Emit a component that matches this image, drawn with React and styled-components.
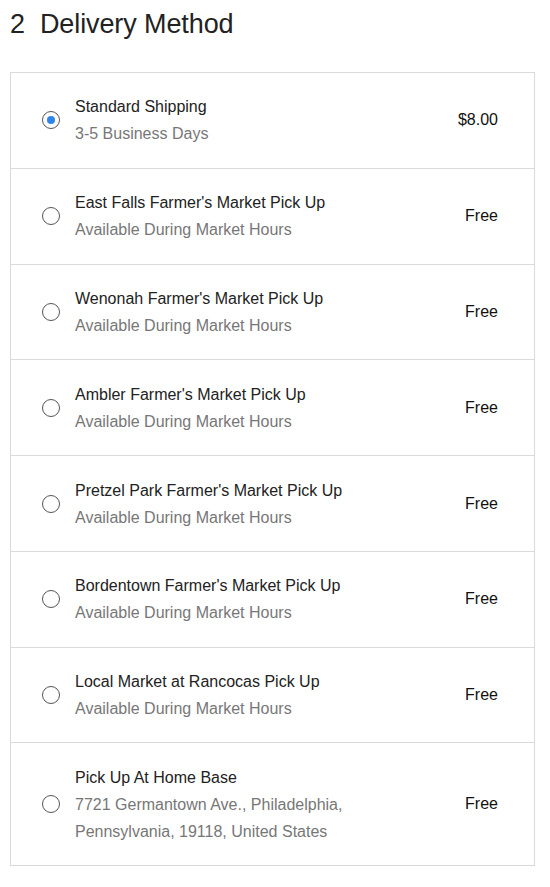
import React, { useState } from 'react'
import styled, { createGlobalStyle } from 'styled-components'

const GlobalStyle = createGlobalStyle`
  body {
    margin: 0;
    background: #fff;
    font-family: "Liberation Sans", Arial, sans-serif;
  }
`

const Page = styled.div`
  padding: 7px 15px 20px 10px;
  width: 550px;
  box-sizing: border-box;
`

const Heading = styled.h2`
  margin: 0 0 30px 0;
  font-size: 27px;
  font-weight: 400;
  line-height: 35px;
  color: #222;
  letter-spacing: -0.1px;
  > span {
    margin-right: 15px;
  }
`

const Options = styled.ul`
  margin: 0;
  padding: 0;
  list-style: none;
  border: 1px solid #dadada;
`

const Option = styled.li`
  display: flex;
  align-items: center;
  padding: 20.4px 36px 20.4px 31px;
  cursor: pointer;
  & + & {
    border-top: 1px solid #dadada;
  }
`

const Radio = styled.span`
  flex: none;
  width: 18px;
  height: 18px;
  box-sizing: border-box;
  border-radius: 50%;
  border: 1px solid #555;
  display: flex;
  align-items: center;
  justify-content: center;
  margin-right: 15px;
  &::after {
    content: '';
    width: 8px;
    height: 8px;
    border-radius: 50%;
    background: ${p => (p.$checked ? '#2f84ec' : 'transparent')};
  }
`

const Info = styled.div`
  flex: 1;
  line-height: 27px;
  font-size: 16px;
`

const Title = styled.div`
  color: #222;
`

const Detail = styled.div`
  color: #777;
  white-space: pre-line;
`

const Price = styled.div`
  font-size: 16px;
  color: #111;
`

const methods = [
  { id: 'standard', title: 'Standard Shipping', detail: '3-5 Business Days', price: '$8.00' },
  { id: 'eastfalls', title: "East Falls Farmer's Market Pick Up", detail: 'Available During Market Hours', price: 'Free' },
  { id: 'wenonah', title: "Wenonah Farmer's Market Pick Up", detail: 'Available During Market Hours', price: 'Free' },
  { id: 'ambler', title: "Ambler Farmer's Market Pick Up", detail: 'Available During Market Hours', price: 'Free' },
  { id: 'pretzel', title: "Pretzel Park Farmer's Market Pick Up", detail: 'Available During Market Hours', price: 'Free' },
  { id: 'bordentown', title: "Bordentown Farmer's Market Pick Up", detail: 'Available During Market Hours', price: 'Free' },
  { id: 'rancocas', title: 'Local Market at Rancocas Pick Up', detail: 'Available During Market Hours', price: 'Free' },
  { id: 'home', title: 'Pick Up At Home Base', detail: '7721 Germantown Ave., Philadelphia,\nPennsylvania, 19118, United States', price: 'Free' }
]

const App = () => {
  const [selected, setSelected] = useState('standard')
  return (
    <Page>
      <GlobalStyle />
      <Heading><span>2</span>Delivery Method</Heading>
      <Options>
        {methods.map(m => (
          <Option key={m.id} onClick={() => setSelected(m.id)}>
            <Radio $checked={selected === m.id} />
            <Info>
              <Title>{m.title}</Title>
              <Detail>{m.detail}</Detail>
            </Info>
            <Price>{m.price}</Price>
          </Option>
        ))}
      </Options>
    </Page>
  )
}

export default App
